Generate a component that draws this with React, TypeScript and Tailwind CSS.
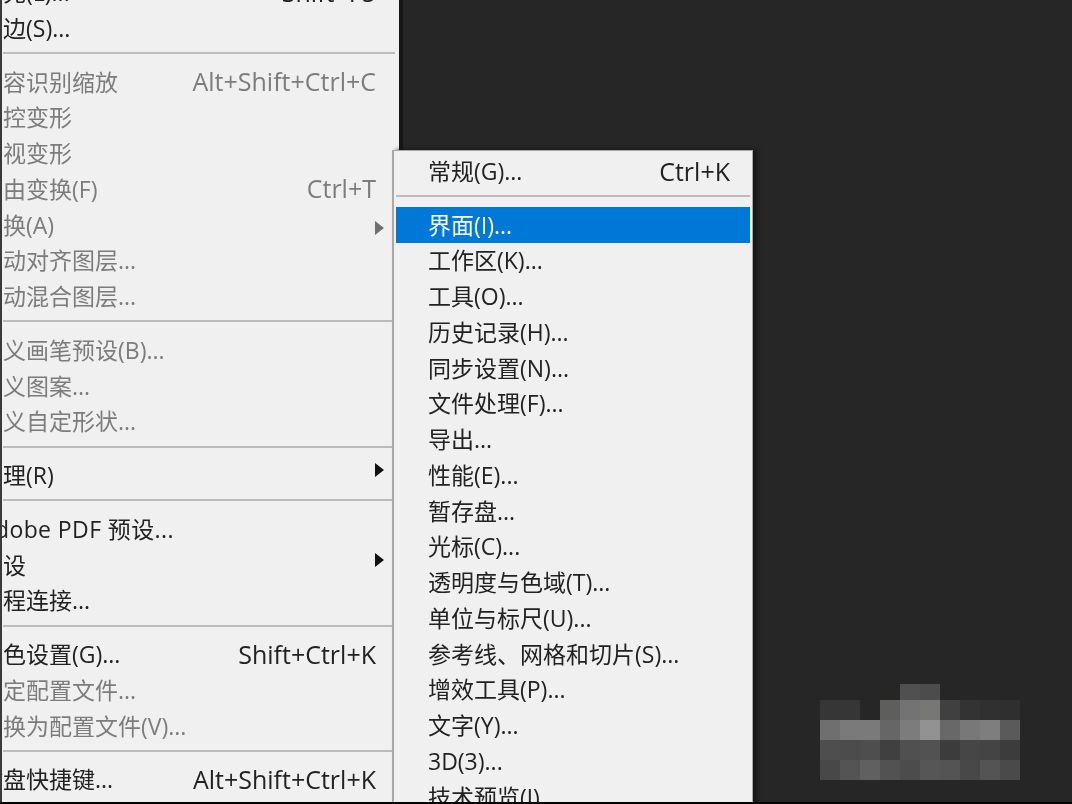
import React from 'react';

type Item = {
  label?: string;
  shortcut?: string;
  off?: boolean;
  arrow?: 'up' | 'down';
  sep?: boolean;
};

const editMenu: Item[] = [
  { label: '填充(L)...', shortcut: 'Shift+F5' },
  { label: '描边(S)...' },
  { sep: true },
  { label: '内容识别缩放', shortcut: 'Alt+Shift+Ctrl+C', off: true },
  { label: '操控变形', off: true },
  { label: '透视变形', off: true },
  { label: '自由变换(F)', shortcut: 'Ctrl+T', off: true },
  { label: '变换(A)', off: true, arrow: 'down' },
  { label: '自动对齐图层...', off: true },
  { label: '自动混合图层...', off: true },
  { sep: true },
  { label: '定义画笔预设(B)...', off: true },
  { label: '定义图案...', off: true },
  { label: '定义自定形状...', off: true },
  { sep: true },
  { label: '清理(R)', arrow: 'up' },
  { sep: true },
  { label: 'Adobe PDF 预设...' },
  { label: '预设', arrow: 'up' },
  { label: '远程连接...' },
  { sep: true },
  { label: '颜色设置(G)...', shortcut: 'Shift+Ctrl+K' },
  { label: '指定配置文件...', off: true },
  { label: '转换为配置文件(V)...', off: true },
  { sep: true },
  { label: '键盘快捷键...', shortcut: 'Alt+Shift+Ctrl+K' },
];

const prefsMenu = [
  '界面(I)...',
  '工作区(K)...',
  '工具(O)...',
  '历史记录(H)...',
  '同步设置(N)...',
  '文件处理(F)...',
  '导出...',
  '性能(E)...',
  '暂存盘...',
  '光标(C)...',
  '透明度与色域(T)...',
  '单位与标尺(U)...',
  '参考线、网格和切片(S)...',
  '增效工具(P)...',
  '文字(Y)...',
  '3D(3)...',
  '技术预览(J)...',
];

const mosaic = [
  ['', '', '', '', '#505050', '#4c4c4c', '', '', '', ''],
  ['#363636', '#363636', '', '#5e5e5c', '#737373', '#777775', '#404040', '#333333', '#303030', '#2f2f2f'],
  ['#6f6f6f', '#7a7a7a', '#7a7a7a', '#666666', '#7c7c7c', '#929292', '#686868', '#787878', '#7e7e7e', '#5a5a5a'],
  ['#4e4e4e', '#4c4c4c', '#4e4e4e', '#404040', '#505050', '#525252', '#3c3c3c', '#464646', '#444444', '#3c3c3c'],
  ['#484848', '#545454', '#606060', '#525252', '#4c4c4c', '#565656', '#545454', '#484848', '#545454', '#4a4a4a'],
];

const Arrow = ({ kind, off }: { kind: 'up' | 'down'; off?: boolean }) => (
  <svg
    viewBox="0 0 9 14"
    className={`h-[14px] w-[9px] ${kind === 'up' ? '-translate-y-[5px]' : 'translate-y-[3px]'} ${off ? 'text-[#6e6e6e]' : 'text-[#111111]'}`}
  >
    <path d="M0 0 L9 7 L0 14 Z" fill="currentColor" />
  </svg>
);

export default function App() {
  return (
    <div className="relative h-[804px] w-[1072px] overflow-hidden bg-[#262626] font-['Open_Sans','Noto_Sans_CJK_SC',sans-serif] text-[23px] text-[#222222] blur-[0.4px]">
      <div className="flex h-[802px]">
        <div className="w-[2px] bg-[#3a3a3a]" />
        {/* edit menu, cut off on the left and top */}
        <div className="h-full w-[397px] overflow-hidden bg-[#f0f0f0]">
          <div className="-mt-[25.5px] -ml-[22px] pr-[4px]">
            {editMenu.map((item, i) =>
              item.sep ? (
                <div key={i} className="h-[18px] pt-[6px] pl-[23px]">
                  <div className="h-[2px] w-full bg-[#bcbcbc]" />
                </div>
              ) : (
                <div
                  key={i}
                  className={`flex h-[35.75px] items-center justify-between whitespace-nowrap pr-[11px] ${item.off ? 'text-[#7c7c7c]' : ''}`}
                >
                  <span className={item.label?.startsWith('Adobe') ? 'tracking-[0.4px]' : ''}>{item.label}</span>
                  {item.shortcut && <span className="pr-[8px] text-[25px]">{item.shortcut}</span>}
                  {item.arrow && <Arrow kind={item.arrow} off={item.off} />}
                </div>
              ),
            )}
          </div>
        </div>
        <div className="w-[4px] bg-[#161616]" />
      </div>
      <div className="h-[2px] bg-black" />

      {/* preferences submenu */}
      <div className="absolute top-[150px] left-[392px] h-[654px] w-[361px] overflow-hidden border-t border-r border-l-2 border-[#a9a9a9] bg-[#f0f0f0] px-[2px] shadow-[4px_0_4px_#161616]">
        <div className="flex h-[36px] items-center justify-between pt-[5px] pr-[20px] pl-[32px]">
          <span>常规(G)...</span>
          <span className="text-[25px]">Ctrl+K</span>
        </div>
        <div className="h-[20px] pt-[8px]">
          <div className="h-[2px] w-full bg-[#bcbcbc]" />
        </div>
        {prefsMenu.map((label, i) => (
          <div
            key={label}
            className={`flex h-[35.75px] items-center whitespace-nowrap pl-[32px] ${i === 0 ? 'bg-[#0078d7] text-white' : ''}`}
          >
            {label}
          </div>
        ))}
      </div>
      <div className="absolute right-0 bottom-0 left-[392px] h-[2px] bg-black" />

      {/* pixelated watermark */}
      <svg className="absolute top-[680px] left-[820px] h-[100px] w-[200px]" viewBox="0 0 200 100">
        {mosaic.map((row, r) =>
          row.map((fill, c) =>
            fill ? (
              <rect key={`${r}-${c}`} x={c * 20} y={r === 0 ? 4 : r * 20} width="20" height={r === 0 ? 16 : 20} fill={fill} />
            ) : null,
          ),
        )}
      </svg>
    </div>
  );
}
